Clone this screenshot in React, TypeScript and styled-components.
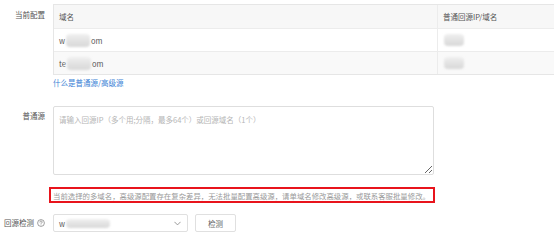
import React from "react";
import styled, { createGlobalStyle } from "styled-components";

const GlobalStyle = createGlobalStyle`
  html, body {
    margin: 0;
    padding: 0;
    background: #ffffff;
    overflow: hidden;
  }
  body {
    font-family: "Noto Sans CJK SC", "Noto Sans", "Liberation Sans", sans-serif;
    font-size: 7.5px;
    color: #555;
  }
`;

const Page = styled.div`
  width: 554px;
  height: 247px;
  padding-top: 4px;
  box-sizing: border-box;
  overflow: hidden;
  display: flex;
  flex-direction: column;
`;

const Row = styled.div<{ $mt?: number }>`
  display: grid;
  grid-template-columns: 45px 1fr;
  column-gap: 8px;
  margin-top: ${(p) => p.$mt ?? 0}px;
  align-items: start;
`;

const Label = styled.div<{ $pt?: number }>`
  text-align: right;
  color: #555;
  font-size: 7.5px;
  line-height: 10px;
  padding-top: ${(p) => p.$pt ?? 0}px;
  white-space: nowrap;
  display: flex;
  justify-content: flex-end;
  align-items: center;
  gap: 3px;
`;

const Table = styled.div`
  width: 520px;
  border: 1px solid #e6e6e6;
  border-right: none;
  box-sizing: border-box;
`;

const TRow = styled.div<{ $bg: string; $h: number }>`
  display: grid;
  grid-template-columns: 383px 1fr;
  height: ${(p) => p.$h}px;
  background: ${(p) => p.$bg};
  border-top: 1px solid #ececec;
  &:first-child {
    border-top: none;
  }
`;

const Cell = styled.div`
  display: flex;
  align-items: center;
  padding-left: 5px;
  font-size: 7.5px;
  color: #555;
  & + & {
    border-left: 1px solid #ececec;
  }
`;

const Blur = styled.span<{ $w: number; $h: number }>`
  display: inline-block;
  width: ${(p) => p.$w}px;
  height: ${(p) => p.$h}px;
  border-radius: 4px;
  background: linear-gradient(180deg, #f0f0f0 0%, #e2e2e2 55%, #d8d8d8 100%);
  filter: blur(1px);
  margin: 0 1px;
`;

const Link = styled.a`
  color: #3a7fd5;
  font-size: 7.5px;
  line-height: 10px;
  text-decoration: none;
  margin-top: 3px;
  display: inline-block;
`;

const TextArea = styled.textarea`
  width: 381px;
  height: 69px;
  box-sizing: border-box;
  border: 1px solid #dedede;
  border-radius: 2px;
  padding: 8px 5px;
  font-family: inherit;
  font-size: 7.5px;
  line-height: 10px;
  color: #555;
  outline: none;
  display: block;
  &::placeholder {
    color: #b5b5b5;
  }
`;

const Warning = styled.div`
  margin: 12px 0 0 -4px;
  width: 386px;
  height: 16px;
  box-sizing: border-box;
  border: 2px solid #e8141c;
  padding-left: 2px;
  display: flex;
  align-items: center;
  color: #999;
  font-size: 7.4px;
  white-space: nowrap;
`;

const Controls = styled.div`
  display: flex;
  gap: 7px;
  align-items: center;
`;

const Select = styled.div`
  width: 135px;
  height: 18px;
  box-sizing: border-box;
  border: 1px solid #e0e0e0;
  border-radius: 2px;
  display: flex;
  align-items: center;
  padding: 0 6px 0 5px;
  color: #555;
  font-size: 7.5px;
`;

const SelectValue = styled.div`
  flex: 1;
  display: flex;
  align-items: center;
`;

const Button = styled.button`
  width: 41px;
  height: 18px;
  box-sizing: border-box;
  border: 1px solid #e0e0e0;
  border-radius: 2px;
  background: #fff;
  color: #666;
  font-family: inherit;
  font-size: 7.5px;
  padding: 0;
`;

const HelpIcon = () => (
  <svg width="8" height="8" viewBox="0 0 16 16" fill="none" stroke="#777" strokeWidth="1.4">
    <circle cx="8" cy="8" r="6.8" />
    <path d="M5.8 6.2a2.2 2.2 0 1 1 3.2 1.9c-.7.4-1 .8-1 1.6" strokeLinecap="round" />
    <circle cx="8" cy="11.8" r="0.6" fill="#777" stroke="none" />
  </svg>
);

const Chevron = () => (
  <svg width="7" height="5" viewBox="0 0 10 6" fill="none" stroke="#888" strokeWidth="1.2">
    <path d="M1 1l4 4 4-4" strokeLinecap="round" strokeLinejoin="round" />
  </svg>
);

const domains = [
  { pre: "w", post: "om", bg: "#ffffff" },
  { pre: "te", post: "om", bg: "#f9f9f9" },
];

const App: React.FC = () => {
  return (
    <>
      <GlobalStyle />
      <Page>
        <Row>
          <Label $pt={6}>当前配置</Label>
          <div>
            <Table>
              <TRow $bg="#f7f7f7" $h={23}>
                <Cell>域名</Cell>
                <Cell>普通回源IP/域名</Cell>
              </TRow>
              {domains.map((d) => (
                <TRow key={d.pre} $bg={d.bg} $h={22}>
                  <Cell>
                    {d.pre}
                    <Blur $w={24} $h={13} />
                    {d.post}
                  </Cell>
                  <Cell>
                    <Blur $w={20} $h={12} />
                  </Cell>
                </TRow>
              ))}
            </Table>
            <Link href="#">什么是普通源/高级源</Link>
          </div>
        </Row>

        <Row $mt={18}>
          <Label $pt={5}>普通源</Label>
          <div>
            <TextArea placeholder="请输入回源IP（多个用;分隔，最多64个）或回源域名（1个）" />
            <Warning>
              当前选择的多域名，高级源配置存在复杂差异，无法批量配置高级源，请单域名修改高级源，或联系客服批量修改。
            </Warning>
          </div>
        </Row>

        <Row $mt={11}>
          <Label $pt={4}>
            回源检测 <HelpIcon />
          </Label>
          <Controls>
            <Select>
              <SelectValue>
                w<Blur $w={44} $h={9} />
              </SelectValue>
              <Chevron />
            </Select>
            <Button>检测</Button>
          </Controls>
        </Row>
      </Page>
    </>
  );
};

export default App;
